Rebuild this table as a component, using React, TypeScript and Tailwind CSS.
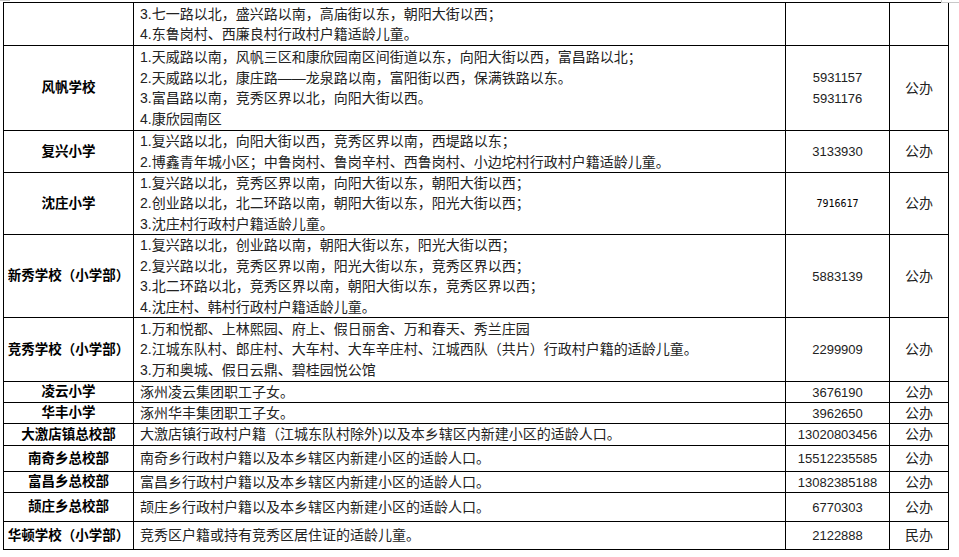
import React from "react";

type Row = {
  h: number;
  name: string;
  lines: string[];
  phone: string[];
  type: string;
  mono?: boolean;
};

const rows: Row[] = [
  {
    h: 43,
    name: "",
    lines: ["3.七一路以北，盛兴路以南，高庙街以东，朝阳大街以西；", "4.东鲁岗村、西廉良村行政村户籍适龄儿童。"],
    phone: [],
    type: "",
  },
  {
    h: 85,
    name: "风帆学校",
    lines: [
      "1.天威路以南，风帆三区和康欣园南区间街道以东，向阳大街以西，富昌路以北；",
      "2.天威路以北，康庄路——龙泉路以南，富阳街以西，保满铁路以东。",
      "3.富昌路以南，竞秀区界以北，向阳大街以西。",
      "4.康欣园南区",
    ],
    phone: ["5931157", "5931176"],
    type: "公办",
  },
  {
    h: 42,
    name: "复兴小学",
    lines: [
      "1.复兴路以北，向阳大街以西，竞秀区界以南，西堤路以东；",
      "2.博鑫青年城小区；中鲁岗村、鲁岗辛村、西鲁岗村、小边坨村行政村户籍适龄儿童。",
    ],
    phone: ["3133930"],
    type: "公办",
  },
  {
    h: 62,
    name: "沈庄小学",
    lines: [
      "1.复兴路以北，竞秀区界以南，向阳大街以东，朝阳大街以西；",
      "2.创业路以北，北二环路以南，朝阳大街以东，阳光大街以西；",
      "3.沈庄村行政村户籍适龄儿童。",
    ],
    phone: ["7916617"],
    type: "公办",
    mono: true,
  },
  {
    h: 83,
    name: "新秀学校（小学部）",
    lines: [
      "1.复兴路以北，创业路以南，朝阳大街以东，阳光大街以西；",
      "2.复兴路以北，竞秀区界以南，阳光大街以东，竞秀区界以西；",
      "3.北二环路以北，竞秀区界以南，朝阳大街以东，竞秀区界以西；",
      "4.沈庄村、韩村行政村户籍适龄儿童。",
    ],
    phone: ["5883139"],
    type: "公办",
  },
  {
    h: 64,
    name: "竞秀学校（小学部）",
    lines: [
      "1.万和悦都、上林熙园、府上、假日丽舍、万和春天、秀兰庄园",
      "2.江城东队村、郎庄村、大车村、大车辛庄村、江城西队（共片）行政村户籍的适龄儿童。",
      "3.万和奥城、假日云鼎、碧桂园悦公馆",
    ],
    phone: ["2299909"],
    type: "公办",
  },
  { h: 21, name: "凌云小学", lines: ["涿州凌云集团职工子女。"], phone: ["3676190"], type: "公办" },
  { h: 21, name: "华丰小学", lines: ["涿州华丰集团职工子女。"], phone: ["3962650"], type: "公办" },
  {
    h: 22,
    name: "大激店镇总校部",
    lines: ["大激店镇行政村户籍（江城东队村除外)以及本乡辖区内新建小区的适龄人口。"],
    phone: ["13020803456"],
    type: "公办",
  },
  {
    h: 26,
    name: "南奇乡总校部",
    lines: ["南奇乡行政村户籍以及本乡辖区内新建小区的适龄人口。"],
    phone: ["15512235585"],
    type: "公办",
  },
  {
    h: 21,
    name: "富昌乡总校部",
    lines: ["富昌乡行政村户籍以及本乡辖区内新建小区的适龄人口。"],
    phone: ["13082385188"],
    type: "公办",
  },
  {
    h: 29,
    name: "颉庄乡总校部",
    lines: ["颉庄乡行政村户籍以及本乡辖区内新建小区的适龄人口。"],
    phone: ["6770303"],
    type: "公办",
  },
  {
    h: 28,
    name: "华顿学校（小学部）",
    lines: ["竞秀区户籍或持有竞秀区居住证的适龄儿童。"],
    phone: ["2122888"],
    type: "民办",
  },
];

export default function App() {
  return (
    <div
      className="relative w-[959px] h-[557px] bg-white overflow-hidden text-[#222]"
      style={{ fontFamily: '"Liberation Sans", "Noto Sans CJK SC", sans-serif' }}
    >
      {/* page corner marks */}
      <div className="absolute left-0 top-0 w-[10px] h-px bg-[#c8c8c8]" />
      <div className="absolute left-[941px] top-0 w-px h-[3px] bg-[#c8c8c8]" />
      <div className="absolute left-[941px] top-[2px] w-[18px] h-px bg-[#c8c8c8]" />

      <div className="pt-[2px] pl-[3px]">
        <div className="grid grid-cols-[130px_652px_104px_59px] w-fit border-l border-t border-black">
          {rows.map((r, i) => (
            <React.Fragment key={i}>
              <div
                className="flex items-center justify-center border-r border-b border-black text-[13.5px] font-bold text-black leading-[20px] whitespace-nowrap"
                style={{ height: r.h }}
              >
                {r.name}
              </div>
              <div
                className="flex flex-col justify-center border-r border-b border-black pl-[6px] text-[14px] leading-[20.5px] whitespace-nowrap"
                style={{ height: r.h }}
              >
                {r.lines.map((l, j) => (
                  <div key={j}>{l}</div>
                ))}
              </div>
              <div
                className="flex flex-col items-center justify-center border-r border-b border-black leading-[21px]"
                style={{ height: r.h }}
              >
                {r.phone.map((p, j) =>
                  r.mono ? (
                    <div key={j} className="text-[10px] text-black" style={{ fontFamily: '"DejaVu Sans Mono", monospace' }}>
                      {p}
                    </div>
                  ) : (
                    <div key={j} className="text-[13px]">
                      {p}
                    </div>
                  )
                )}
              </div>
              <div
                className="flex items-center justify-center border-r border-b border-black text-[14px]"
                style={{ height: r.h }}
              >
                {r.type}
              </div>
            </React.Fragment>
          ))}
        </div>
      </div>
    </div>
  );
}
